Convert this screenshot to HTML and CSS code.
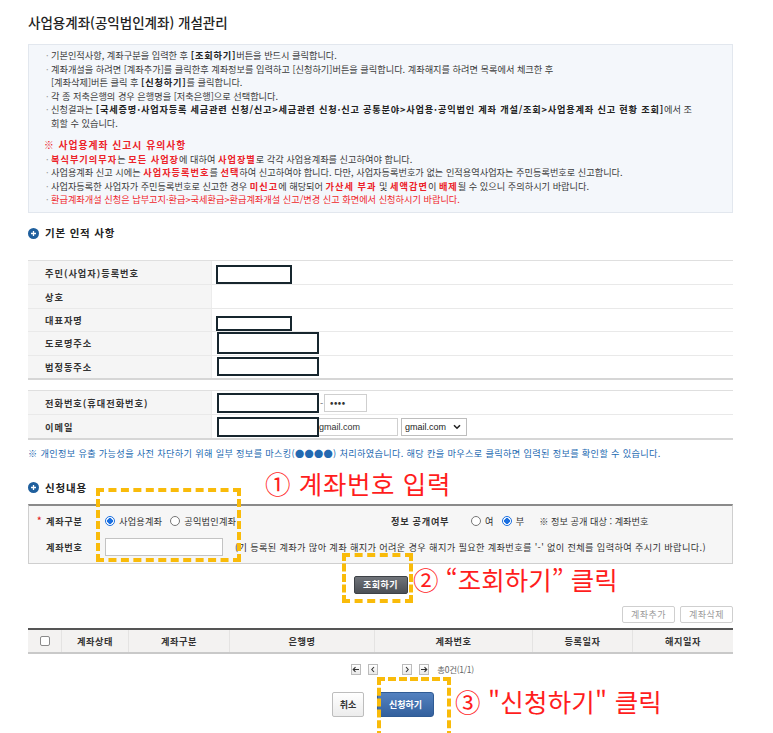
FILE: index.html
```html
<!DOCTYPE html>
<html lang="ko">
<head>
<meta charset="utf-8">
<title>사업용계좌(공익법인계좌) 개설관리</title>
<link rel="stylesheet" href="styles.css">
</head>
<body>
<div class="page">
  <h1 class="title">사업용계좌(공익법인계좌) 개설관리</h1>

  <div class="notice">
    <ul class="bul">
      <li>기본인적사항, 계좌구분을 입력한 후 <b>[조회하기]</b>버튼을 반드시 클릭합니다.</li>
      <li>계좌개설을 하려면 [계좌추가]를 클릭한후 계좌정보를 입력하고 [신청하기]버튼을 클릭합니다. 계좌해지를 하려면 목록에서 체크한 후<br>[계좌삭제]버튼 클릭 후 <b>[신청하기]</b>를 클릭합니다.</li>
      <li>각 종 저축은행의 경우 은행명을 [저축은행]으로 선택합니다.</li>
      <li>신청결과는 <b>[국세증명·사업자등록 세금관련 신청/신고&gt;세금관련 신청·신고 공통분야&gt;사업용·공익법인 계좌 개설/조회&gt;사업용계좌 신고 현황 조회]</b>에서 조<br>회할 수 있습니다.</li>
    </ul>
    <p class="warn">※ 사업용계좌 신고시 유의사항</p>
    <ul class="bul">
      <li><em>복식부기의무자</em>는 <em>모든 사업장</em>에 대하여 <em>사업장별</em>로 각각 사업용계좌를 신고하여야 합니다.</li>
      <li>사업용계좌 신고 시에는 <em>사업자등록번호</em>를 <em>선택</em>하여 신고하여야 합니다. 다만, 사업자등록번호가 없는 인적용역사업자는 주민등록번호로 신고합니다.</li>
      <li>사업자등록한 사업자가 주민등록번호로 신고한 경우 <em>미신고</em>에 해당되어 <em>가산세 부과</em> 및 <em>세액감면</em>이 <em>배제</em>될 수 있으니 주의하시기 바랍니다.</li>
      <li class="red">환급계좌개설 신청은 납부고지·환급&gt;국세환급&gt;환급계좌개설 신고/변경 신고 화면에서 신청하시기 바랍니다.</li>
    </ul>
  </div>

  <h2 class="sec sec1"><svg class="ico" width="11" height="11" viewBox="0 0 11 11"><circle cx="5.5" cy="5.5" r="5.5" fill="#1f5f9d"/><path d="M3 5.5h5M5.5 3v5" stroke="#fff" stroke-width="1.3"/></svg>기본 인적 사항</h2>

  <div class="info">
    <div class="row"><div class="lab">주민(사업자)등록번호</div><div class="val"><span class="mask m1"></span></div></div>
    <div class="row"><div class="lab">상호</div><div class="val"></div></div>
    <div class="row"><div class="lab">대표자명</div><div class="val"><span class="mask m2"></span></div></div>
    <div class="row"><div class="lab">도로명주소</div><div class="val"><span class="mask m3"></span></div></div>
    <div class="row"><div class="lab">법정동주소</div><div class="val"><span class="mask m4"></span></div></div>
  </div>

  <div class="info info2">
    <div class="row"><div class="lab">전화번호(휴대전화번호)</div><div class="val"><span class="mask m3 mh"></span><span class="dash">-</span><span class="inp pw">••••</span></div></div>
    <div class="row"><div class="lab">이메일</div><div class="val"><span class="mask m3 mh"></span><span class="inp em">gmail.com</span><span class="sel">gmail.com<svg width="8" height="6" viewBox="0 0 8 6"><path d="M1 1.2l3 3 3-3" fill="none" stroke="#222" stroke-width="1.6"/></svg></span></div></div>
  </div>

  <p class="mask-note">※ 개인정보 유출 가능성을 사전 차단하기 위해 일부 정보를 마스킹(●●●●) 처리하였습니다. 해당 칸을 마우스로 클릭하면 입력된 정보를 확인할 수 있습니다.</p>

  <h2 class="sec sec2"><svg class="ico" width="11" height="11" viewBox="0 0 11 11"><circle cx="5.5" cy="5.5" r="5.5" fill="#1f5f9d"/><path d="M3 5.5h5M5.5 3v5" stroke="#fff" stroke-width="1.3"/></svg>신청내용</h2>

  <div class="form">
    <div class="frow">
      <div class="flab"><span class="star">*</span>계좌구분</div>
      <div class="radios">
        <span class="rd on"></span><span class="rt">사업용계좌</span>
        <span class="rd"></span><span class="rt">공익법인계좌</span>
      </div>
      <div class="flab2">정보 공개여부</div>
      <span class="rd"></span><span class="rt">여</span>
      <span class="rd on"></span><span class="rt">부</span>
      <span class="pub">※ 정보 공개 대상 : 계좌번호</span>
    </div>
    <div class="frow">
      <div class="flab"><span class="star blank">*</span>계좌번호</div>
      <span class="acct"></span>
      <span class="hint">(기 등록된 계좌가 많아 계좌 해지가 어려운 경우 해지가 필요한 계좌번호를 '-' 없이 전체를 입력하여 주시기 바랍니다.)</span>
    </div>
  </div>

  <div class="search-row"><button class="btn-dark">조회하기</button></div>

  <div class="tool-row"><button class="btn-light">계좌추가</button><button class="btn-light">계좌삭제</button></div>

  <div class="grid-head">
    <div class="gh"><span class="chk"></span></div>
    <div class="gh">계좌상태</div>
    <div class="gh">계좌구분</div>
    <div class="gh">은행명</div>
    <div class="gh">계좌번호</div>
    <div class="gh">등록일자</div>
    <div class="gh">해지일자</div>
  </div>

  <div class="pager">
    <span class="pg"><svg width="8" height="7" viewBox="0 0 8 7"><path d="M7 3.5H1.5M3.5 1.2L1.2 3.5 3.5 5.8" fill="none" stroke="#333" stroke-width="1.1"/></svg></span>
    <span class="pg"><svg width="8" height="7" viewBox="0 0 8 7"><path d="M5 1L2.8 3.5 5 6" fill="none" stroke="#333" stroke-width="1.1"/></svg></span>
    <span class="pg-gap"></span>
    <span class="pg"><svg width="8" height="7" viewBox="0 0 8 7"><path d="M3 1L5.2 3.5 3 6" fill="none" stroke="#333" stroke-width="1.1"/></svg></span>
    <span class="pg"><svg width="8" height="7" viewBox="0 0 8 7"><path d="M1 3.5H6.5M4.5 1.2L6.8 3.5 4.5 5.8" fill="none" stroke="#333" stroke-width="1.1"/></svg></span>
    <span class="total">총0건(1/1)</span>
  </div>

  <div class="action-row"><button class="btn-cancel">취소</button><button class="btn-blue">신청하기</button></div>
</div>

<div class="dash-box box1"></div>
<div class="dash-box box2"></div>
<div class="dash-box box3"></div>
<div class="anno anno1">① 계좌번호 입력</div>
<div class="anno anno2">② “조회하기” 클릭</div>
<div class="anno anno3">③ "신청하기" 클릭</div>
</body>
</html>
```

FILE: styles.css
```css
* { box-sizing: border-box; }
html, body { margin: 0; padding: 0; background: #fff; }
body {
  position: relative;
  width: 773px;
  height: 733px;
  overflow: hidden;
  font-family: "Noto Sans CJK KR", "Noto Sans", sans-serif;
  font-size: 9.2px;
  color: #3a3a3a;
}
.page { margin-left: 28px; width: 705px; }

.title {
  margin: 0;
  height: 44px;
  line-height: 44px;
  font-size: 13.5px;
  font-weight: 500;
  color: #222;
}

/* notice box */
.notice {
  height: 169px;
  background: #f4f7fb;
  border: 1px solid #e2e7ee;
  padding: 4px 8px 5px 17px;
}
.bul { list-style: none; margin: 0; padding: 0; }
.bul li {
  line-height: 13.6px;
  white-space: nowrap;
  padding-left: 5px;
  text-indent: -5px;
}
.bul li::before {
  content: "·";
  display: inline-block;
  width: 5px;
  text-indent: 0;
  color: #999;
}
.bul b { font-weight: 700; color: #222; letter-spacing: 0.8px; }
.bul em { font-style: normal; font-weight: 700; color: #ec2229; letter-spacing: 1px; }
.bul li.red { color: #f0262c; }
.warn {
  margin: 8.4px 0 0 -2px;
  line-height: 13.6px;
  font-size: 9.8px;
  font-weight: 700;
  letter-spacing: 1px;
  color: #ec2229;
}

/* section heads */
.sec {
  margin: 0;
  display: flex;
  align-items: center;
  font-size: 10.5px;
  font-weight: 700;
  letter-spacing: 0.8px;
  color: #222;
  line-height: 14px;
}
.sec .ico { flex: none; margin-right: 6px; }
.sec1 { padding: 13px 0 20px; }
.sec2 { margin-top: 21px; margin-bottom: 9px; }

/* info tables */
.info {
  border-top: 1px solid #dfdfdf;
  border-bottom: 2px solid #d6d6d6;
}
.info2 { margin-top: 10px; }
.row {
  display: flex;
  height: 23.4px;
  border-top: 1px solid #e9e9e9;
}
.row:first-child { border-top: none; }
.lab {
  width: 184px;
  flex: none;
  background: #f5f5f5;
  border-right: 1px solid #ececec;
  padding-left: 17px;
  display: flex;
  align-items: center;
  font-weight: 700;
  letter-spacing: 1px;
  color: #333;
}
.val {
  flex: 1;
  display: flex;
  align-items: center;
  padding-left: 4px;
}
.mask {
  display: block;
  border: 2px solid #17262e;
  background: #fff;
  flex: none;
}
.m1 { width: 76px; height: 19px; align-self: flex-end; }
.m2 { width: 76px; height: 15px; align-self: flex-end; }
.m3 { width: 102px; height: 22px; margin-left: 1px; }
.m4 { width: 102px; height: 19px; margin-left: 1px; }
.mh { height: 20px; }
.dash { width: 5px; text-align: center; color: #666; flex: none; }
.inp {
  display: flex;
  align-items: center;
  height: 18px;
  border: 1px solid #cfcfcf;
  background: #fff;
  flex: none;
  font-size: 9px;
  color: #333;
}
.pw { width: 43px; padding-left: 5px; font-weight: 700; letter-spacing: 0.5px; }
.em { width: 79px; border-left: none; padding-left: 0; font-family: "Liberation Sans", Arial, sans-serif; }
.sel {
  display: flex;
  align-items: center;
  justify-content: space-between;
  width: 66px;
  height: 18px;
  margin-left: 3px;
  border: 1px solid #bdbdbd;
  background: #fff;
  padding: 0 5px 0 3px;
  font-family: "Liberation Sans", Arial, sans-serif;
  font-size: 9px;
  color: #222;
}

.mask-note {
  margin: 0;
  padding-top: 7px;
  line-height: 13px;
  color: #2369b1;
  letter-spacing: 0.32px;
  white-space: nowrap;
}

/* application form */
.form {
  height: 60px;
  background: #f6f6f6;
  border: 1px solid #cfcfcf;
  border-top: 2px solid #8a8a8a;
  padding: 2px 0 3px;
}
.frow {
  display: flex;
  align-items: center;
  height: 26px;
  white-space: nowrap;
}
.flab {
  width: 76px;
  flex: none;
  padding-left: 8px;
  font-weight: 700;
  letter-spacing: 0.7px;
  color: #333;
  display: flex;
  align-items: center;
}
.star { color: #e3262b; width: 9px; font-size: 9px; letter-spacing: 0; }
.star.blank { visibility: hidden; }
.radios { width: 286px; flex: none; display: flex; align-items: center; }
.rd {
  width: 10px;
  height: 10px;
  border-radius: 50%;
  border: 1px solid #767676;
  background: #fff;
  flex: none;
}
.rd.on {
  border-color: #1a6fe0;
  background: radial-gradient(circle, #1a6fe0 0 2.6px, #fff 3px);
}
.rt { margin: 0 8px 0 4px; color: #333; letter-spacing: 0.2px; }
.flab2 { width: 80px; flex: none; font-weight: 700; letter-spacing: 0.7px; color: #333; }
.pub { margin-left: 7px; color: #333; }
.acct {
  width: 118px;
  height: 18px;
  border: 1px solid #c3c3c3;
  background: #fff;
  flex: none;
}
.hint { margin-left: 12px; color: #333; letter-spacing: 0.35px; }

/* buttons */
button { font-family: inherit; cursor: pointer; }
.search-row { display: flex; justify-content: center; margin-top: 12px; }
.btn-dark {
  width: 54px;
  height: 18px;
  padding: 0;
  border: 1px solid #3d4146;
  border-radius: 2px;
  background: linear-gradient(#70747a, #4b4f55);
  color: #fff;
  font-size: 9px;
  font-weight: 700;
  letter-spacing: 0.5px;
}
.tool-row { display: flex; justify-content: flex-end; gap: 5px; margin-top: 12px; }
.btn-light {
  width: 53px;
  height: 17px;
  padding: 0;
  border: 1px solid #cfcfcf;
  border-radius: 2px;
  background: #fff;
  color: #9a9a9a;
  font-size: 9px;
  letter-spacing: 0.5px;
}

/* grid header */
.grid-head {
  display: grid;
  grid-template-columns: 33px 67px 101px 145px 158px 100px 101px;
  height: 26px;
  margin-top: 5px;
  border-top: 2px solid #555;
  border-bottom: 2px solid #c9c9c9;
  background: #f3f2f1;
}
.gh {
  display: flex;
  align-items: center;
  justify-content: center;
  font-weight: 700;
  letter-spacing: 0.5px;
  color: #333;
  border-left: 1px solid #e4e3e2;
}
.gh:first-child { border-left: none; }
.chk {
  width: 10px;
  height: 10px;
  border: 1px solid #8a8a8a;
  border-radius: 2px;
  background: #fff;
}

/* pager */
.pager {
  display: flex;
  align-items: center;
  justify-content: center;
  gap: 7px;
  margin-top: 10px;
  height: 11px;
  padding-left: 64px;
}
.pg {
  width: 10px;
  height: 11px;
  border: 1px solid #bbb;
  background: linear-gradient(#fff, #e9e9e9);
  display: flex;
  align-items: center;
  justify-content: center;
}
.pg-gap { width: 10px; }
.total { font-size: 8.5px; color: #666; margin-left: 1px; letter-spacing: -0.3px; }

.action-row { display: flex; justify-content: center; gap: 13px; margin-top: 17px; padding-left: 5px; }
.btn-cancel {
  width: 32px;
  height: 25px;
  padding: 0;
  border: 1px solid #bdbdbd;
  border-radius: 2px;
  background: linear-gradient(#fff, #ececec);
  color: #333;
  font-size: 9px;
  font-weight: 700;
}
.btn-blue {
  width: 57px;
  height: 25px;
  padding: 0;
  border: 1px solid #2f5b94;
  border-radius: 3px;
  background: linear-gradient(#5482c0, #33609d);
  color: #fff;
  font-size: 9px;
  font-weight: 700;
}

/* annotation overlays */
.dash-box {
  position: absolute;
  border: 4px dashed #f9bb0a;
}
.box1 { left: 96px; top: 488px; width: 145px; height: 74px; }
.box2 { left: 342px; top: 553px; width: 71px; height: 50px; }
.box3 { left: 377px; top: 677px; width: 74px; height: 62px; }
.anno {
  position: absolute;
  color: #ff1d1d;
  font-size: 25.5px;
  font-weight: 400;
  line-height: 30px;
  white-space: nowrap;
}
.anno1 { left: 265px; top: 468px; letter-spacing: 0.6px; }
.anno2 { left: 413px; top: 564px; }
.anno3 { left: 455px; top: 686px; letter-spacing: 0.2px; }
```
